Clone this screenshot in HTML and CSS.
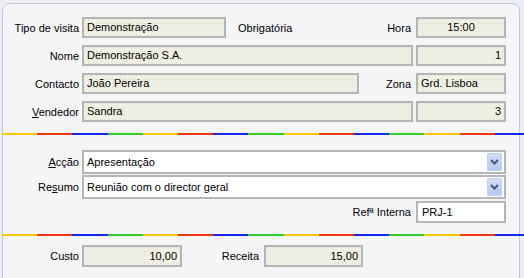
FILE: index.html
```html
<!DOCTYPE html>
<html lang="pt">
<head>
    <meta charset="UTF-8">
    <title>Visita</title>
    <link rel="stylesheet" href="styles.css">
</head>
<body>
    <div class="frame">
        <div class="rows">
            <div class="row">
                <span class="lbl">Tipo de visita</span>
                <div class="fld w-tipo">Demonstração</div>
                <span class="note">Obrigatória</span>
                <span class="lbl-r">Hora</span>
                <div class="fld w-side center">15:00</div>
            </div>
            <div class="row">
                <span class="lbl">Nome</span>
                <div class="fld w-wide">Demonstração S.A.</div>
                <div class="fld w-side num">1</div>
            </div>
            <div class="row">
                <span class="lbl">Contacto</span>
                <div class="fld w-contact">João Pereira</div>
                <span class="lbl-r grow">Zona</span>
                <div class="fld w-side">Grd. Lisboa</div>
            </div>
            <div class="row">
                <span class="lbl"><u>V</u>endedor</span>
                <div class="fld w-wide">Sandra</div>
                <div class="fld w-side num">3</div>
            </div>
        </div>

        <div class="sep sep-top"></div>

        <div class="combo-row">
            <span class="lbl"><u>A</u>cção</span>
            <div class="combo">
                <span class="combo-text">Apresentação</span>
                <span class="drop"><svg width="9" height="6" viewBox="0 0 9 6"><path d="M1 1 L4.5 4.5 L8 1" fill="none" stroke="#4a5a80" stroke-width="2.2"/></svg></span>
            </div>
        </div>
        <div class="combo-row gap1">
            <span class="lbl">Re<u>s</u>umo</span>
            <div class="combo">
                <span class="combo-text">Reunião com o director geral</span>
                <span class="drop"><svg width="9" height="6" viewBox="0 0 9 6"><path d="M1 1 L4.5 4.5 L8 1" fill="none" stroke="#4a5a80" stroke-width="2.2"/></svg></span>
            </div>
        </div>
        <div class="ref-row">
            <span class="lbl-r">Refª Interna</span>
            <div class="edit w-side">PRJ-1</div>
        </div>

        <div class="sep sep-bottom"></div>

        <div class="row totals">
            <span class="lbl">Custo</span>
            <div class="fld w-money num">10,00</div>
            <span class="lbl-money">Receita</span>
            <div class="fld w-money2 num">15,00</div>
        </div>
    </div>
</body>
</html>
```

FILE: styles.css
```css
body {
    margin: 0;
    background: #eceef5;
    font-family: "Liberation Sans", Arial, sans-serif;
    font-size: 11px;
    color: #000;
}

.frame {
    margin: 3px 4px 0 2px;
    width: 503px;
    height: 264px;
    padding: 13px 13px 9px 0;
    background-color: #f5f5f7;
    border: 1px solid #c4c7d6;
    border-radius: 8px;
}

.rows {
    display: flex;
    flex-direction: column;
    gap: 7px;
}

.row {
    display: flex;
    align-items: center;
    height: 21px;
}

.lbl {
    width: 76px;
    margin-right: 3px;
    text-align: right;
    white-space: nowrap;
}

.lbl-r {
    margin-right: 5px;
    text-align: right;
    white-space: nowrap;
}

.grow {
    flex: 1;
}

.note {
    flex: 1;
    margin-left: 12px;
}

/* read-only fields: beige with dotted pattern */
.fld {
    box-sizing: border-box;
    height: 21px;
    line-height: 17px;
    padding: 0 3px;
    border: 2px solid #b5b5b5;
    background-color: #efefe3;
    background-image: conic-gradient(at 1px 1px, transparent 75%, #dcdccd 0);
    background-size: 4px 4px;
    white-space: nowrap;
    overflow: hidden;
}

.w-tipo { width: 144px; }
.w-wide { width: 331px; margin-right: 3px; }
.w-contact { width: 277px; }
.w-side { width: 90px; }
.w-money { width: 100px; }
.w-money2 { width: 99px; }

.center { text-align: center; }
.num { text-align: right; }

.sep {
    height: 2px;
    margin-left: -1px;
    margin-right: -18px;
    background: repeating-linear-gradient(90deg,
        #f8c800 0, #f8c800 35.2px,
        #f03414 35.2px, #f03414 70.4px,
        #1428f0 70.4px, #1428f0 105.6px,
        #30cc30 105.6px, #30cc30 140.8px);
}

.sep-top { margin-top: 11px; }
.sep-bottom { margin-top: 11px; }

.combo-row {
    display: flex;
    align-items: center;
    margin-top: 15px;
}

.combo-row.gap1 {
    margin-top: 1px;
}

.combo {
    box-sizing: border-box;
    display: flex;
    align-items: center;
    width: 424px;
    height: 24px;
    padding: 0 2px 0 3px;
    border: 2px solid #b5b5b5;
    background: #fff;
}

.combo-text {
    flex: 1;
}

.drop {
    display: flex;
    align-items: center;
    justify-content: center;
    width: 15px;
    height: 18px;
    border-radius: 2px;
    background: linear-gradient(#d2def9, #b4c7f2);
    box-shadow: inset 0 0 0 1px #c0cff4;
}

.ref-row {
    display: flex;
    align-items: center;
    justify-content: flex-end;
    margin-top: 2px;
}

.edit {
    box-sizing: border-box;
    height: 22px;
    line-height: 18px;
    padding: 0 4px;
    border: 2px solid #b5b5b5;
    background: #fff;
}

.totals {
    margin-top: 9px;
    height: 22px;
}

.totals .fld {
    height: 22px;
    line-height: 18px;
}

.lbl-money {
    width: 77px;
    margin-right: 5px;
    text-align: right;
}
```
